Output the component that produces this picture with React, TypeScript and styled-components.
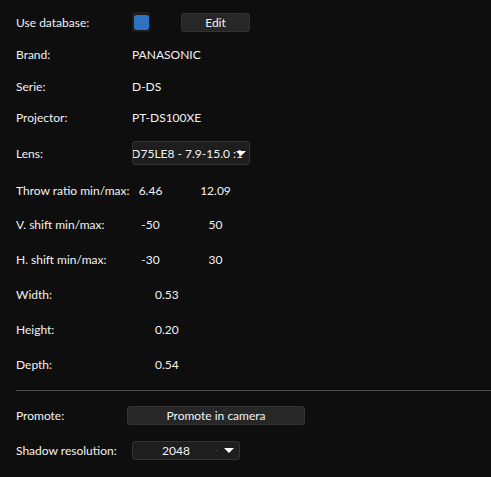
import React from "react";
import styled, { createGlobalStyle } from "styled-components";

const Global = createGlobalStyle`
  html, body { margin: 0; padding: 0; background: #0e0e0e; }
  body { font-family: Lato, "Open Sans", sans-serif; font-size: 12px; color: #f2f2f2; }
`;

const Panel = styled.div`
  width: 491px;
  height: 477px;
  box-sizing: border-box;
  padding: 6px 0 0 16px;
  background: #0e0e0e;
  overflow: hidden;
`;

const Row = styled.div<{ $h: number }>`
  display: grid;
  grid-template-columns: 116px 37px 12px 69px 1fr;
  align-items: center;
  height: ${(p) => p.$h}px;
`;

const Label = styled.div`
  white-space: nowrap;
  grid-column: 1;
`;

const Value = styled.div`
  grid-column: 2 / span 4;
  white-space: nowrap;
`;

const Cell = styled.div<{ $col: number; $center?: boolean }>`
  grid-column: ${(p) => p.$col};
  text-align: ${(p) => (p.$center ? "center" : "left")};
  white-space: nowrap;
`;

const Padded = styled.div`
  grid-column: 2 / span 4;
  padding-left: 23px;
`;

const CheckBox = styled.div`
  grid-column: 2;
  width: 18px;
  height: 20px;
  background: #1c1c1c;
  display: flex;
  align-items: center;
  justify-content: center;
`;

const CheckFill = styled.div`
  width: 15px;
  height: 15px;
  border-radius: 3px;
  background: #2e72c2;
`;

const Button = styled.div<{ $w: number }>`
  width: ${(p) => p.$w}px;
  height: 19px;
  box-sizing: border-box;
  background: #272727;
  border: 1px solid #333;
  border-radius: 3px;
  display: flex;
  align-items: center;
  justify-content: center;
  white-space: nowrap;
`;

const Select = styled.div<{ $w: number }>`
  position: relative;
  width: ${(p) => p.$w}px;
  box-sizing: border-box;
  background: #1e1e1e;
  border: 1px solid #333;
  border-radius: 3px;
  display: flex;
  align-items: center;
  overflow: hidden;
  white-space: nowrap;
`;

const LensSelect = styled(Select)`
  height: 24px;
  justify-content: flex-end;
  padding-right: 6px;
`;

const ShadowSelect = styled(Select)`
  height: 19px;
  padding-left: 29px;
`;

const Arrow = styled.span<{ $right: number }>`
  position: absolute;
  right: ${(p) => p.$right}px;
  top: 50%;
  margin-top: -2px;
  width: 0;
  height: 0;
  border-left: 5px solid transparent;
  border-right: 5px solid transparent;
  border-top: 5px solid #fff;
`;

const Dot = styled.span`
  position: absolute;
  right: 22px;
  top: 50%;
  width: 1px;
  height: 1px;
  background: #555;
`;

const Divider = styled.hr`
  border: none;
  border-top: 1px solid #4a4a4a;
  margin: 8px 0 0 0;
  height: 0;
`;

const Bottom = styled.div`
  display: grid;
  grid-template-rows: 33px 36px;
  padding-top: 8px;
`;

const BottomRow = styled.div<{ $cols: string }>`
  display: grid;
  grid-template-columns: ${(p) => p.$cols};
  align-items: center;
`;

export default function App() {
  return (
    <Panel>
      <Global />
      <Row $h={32}>
        <Label>Use database:</Label>
        <CheckBox>
          <CheckFill />
        </CheckBox>
        <Cell $col={4}>
          <Button $w={69}>Edit</Button>
        </Cell>
      </Row>
      <Row $h={32}>
        <Label>Brand:</Label>
        <Value>PANASONIC</Value>
      </Row>
      <Row $h={32}>
        <Label>Serie:</Label>
        <Value>D-DS</Value>
      </Row>
      <Row $h={31}>
        <Label>Projector:</Label>
        <Value>PT-DS100XE</Value>
      </Row>
      <Row $h={40}>
        <Label>Lens:</Label>
        <Value>
          <LensSelect $w={118}>
            <span>ET-D75LE8 - 7.9-15.0 :1</span>
            <Arrow $right={3} />
          </LensSelect>
        </Value>
      </Row>
      <Row $h={34}>
        <Label>Throw ratio min/max:</Label>
        <Cell $col={2} $center>6.46</Cell>
        <Cell $col={4} $center>12.09</Cell>
      </Row>
      <Row $h={35}>
        <Label>V. shift min/max:</Label>
        <Cell $col={2} $center>-50</Cell>
        <Cell $col={4} $center>50</Cell>
      </Row>
      <Row $h={35}>
        <Label>H. shift min/max:</Label>
        <Cell $col={2} $center>-30</Cell>
        <Cell $col={4} $center>30</Cell>
      </Row>
      <Row $h={35}>
        <Label>Width:</Label>
        <Padded>0.53</Padded>
      </Row>
      <Row $h={35}>
        <Label>Height:</Label>
        <Padded>0.20</Padded>
      </Row>
      <Row $h={35}>
        <Label>Depth:</Label>
        <Padded>0.54</Padded>
      </Row>
      <Divider />
      <Bottom>
        <BottomRow $cols="111px auto">
          <Label>Promote:</Label>
          <Button $w={178}>Promote in camera</Button>
        </BottomRow>
        <BottomRow $cols="116px auto">
          <Label>Shadow resolution:</Label>
          <ShadowSelect $w={108}>
            2048
            <Dot />
            <Arrow $right={5} />
          </ShadowSelect>
        </BottomRow>
      </Bottom>
    </Panel>
  );
}
